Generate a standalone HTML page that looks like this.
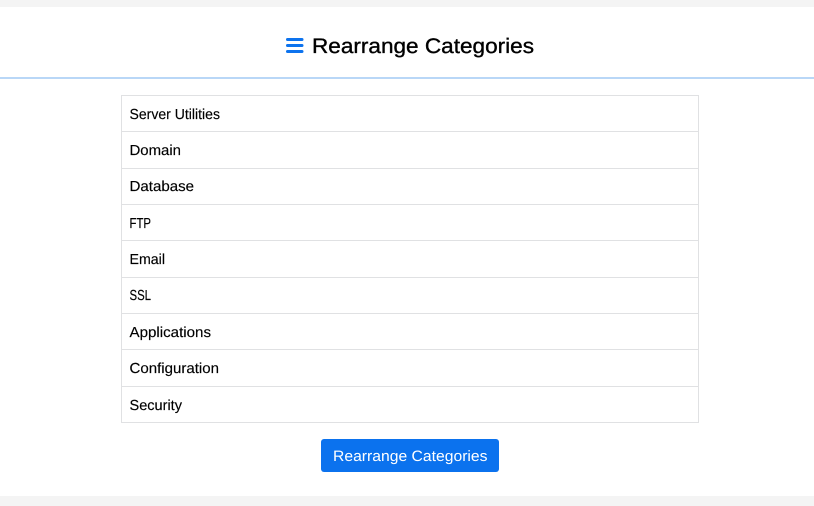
<!DOCTYPE html>
<html><head><meta charset="utf-8"><style>
html,body{margin:0;padding:0;width:814px;height:506px;overflow:hidden;background:#f4f4f4}
svg{position:absolute;left:0;top:0;display:block}
text{font-family:"Liberation Sans",sans-serif;text-rendering:geometricPrecision}
</style></head><body>
<svg width="814" height="506" viewBox="0 0 814 506" xmlns="http://www.w3.org/2000/svg">
<rect x="0" y="7" width="814" height="489" fill="#fff"/>
<rect x="0" y="77" width="814" height="2" fill="#b9d7f7"/>
<rect x="286" y="38" width="17.5" height="3" rx="1.5" fill="#0d73ee"/>
<rect x="286" y="44" width="17.5" height="3" rx="1.5" fill="#0d73ee"/>
<rect x="286" y="50" width="17.5" height="3" rx="1.5" fill="#0d73ee"/>
<text x="312" y="53" font-size="21" fill="#000" stroke="#000" stroke-width="0.35" textLength="222" lengthAdjust="spacingAndGlyphs">Rearrange Categories</text>
<rect x="121.5" y="95.5" width="577" height="327" fill="#fff" stroke="#e0e1e3"/>
<g fill="#e0e1e3">
<rect x="122" y="131" width="576" height="1"/>
<rect x="122" y="168" width="576" height="1"/>
<rect x="122" y="204" width="576" height="1"/>
<rect x="122" y="240" width="576" height="1"/>
<rect x="122" y="277" width="576" height="1"/>
<rect x="122" y="313" width="576" height="1"/>
<rect x="122" y="349" width="576" height="1"/>
<rect x="122" y="386" width="576" height="1"/>
</g>
<g font-size="14.5" fill="#000" stroke="#000" stroke-width="0.15">
<text x="129.5" y="119" textLength="90.5" lengthAdjust="spacingAndGlyphs">Server Utilities</text>
<text x="129.5" y="155" textLength="51.5" lengthAdjust="spacingAndGlyphs">Domain</text>
<text x="129.5" y="191" textLength="64.5" lengthAdjust="spacingAndGlyphs">Database</text>
<text x="129.5" y="228" textLength="21.5" lengthAdjust="spacingAndGlyphs">FTP</text>
<text x="129.5" y="264" textLength="35.5" lengthAdjust="spacingAndGlyphs">Email</text>
<text x="129.5" y="300" textLength="21.5" lengthAdjust="spacingAndGlyphs">SSL</text>
<text x="129.5" y="337" textLength="81.5" lengthAdjust="spacingAndGlyphs">Applications</text>
<text x="129.5" y="373" textLength="89.5" lengthAdjust="spacingAndGlyphs">Configuration</text>
<text x="129.5" y="410" textLength="52.5" lengthAdjust="spacingAndGlyphs">Security</text>
</g>
<rect x="321" y="439" width="178" height="33" rx="3" fill="#0b72ee"/>
<text x="333" y="461" font-size="15" fill="#fff" textLength="154.5" lengthAdjust="spacingAndGlyphs">Rearrange Categories</text>
</svg>
</body></html>
